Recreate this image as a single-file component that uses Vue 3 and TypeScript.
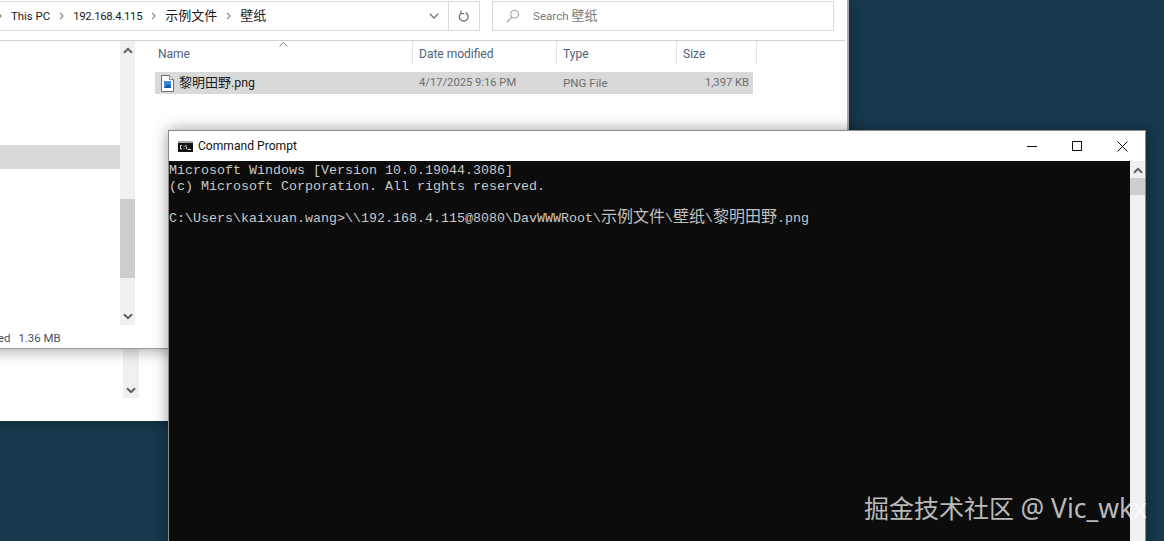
<script setup lang="ts">
interface Col { label: string; width: number }
const cols: Col[] = [
  { label: 'Name', width: 259 },
  { label: 'Date modified', width: 144 },
  { label: 'Type', width: 120 },
  { label: 'Size', width: 80 },
]
const crumbs: string[] = ['This PC', '192.168.4.115', '示例文件', '壁纸']
const isCjk = (s: string): boolean => /[\u4e00-\u9fff]/.test(s)
const isNumeric = (s: string): boolean => /^[\d.]+$/.test(s)
</script>

<template>
  <main class="desktop">
    <section class="win back">
      <div class="back-bar">
        <svg class="chev" width="10" height="7" viewBox="0 0 10 7"><path d="M1 1.200l4 4 4-4" fill="none" stroke="#606060" stroke-width="2" /></svg>
      </div>
    </section>

    <section class="win explorer">
      <header class="toolbar">
        <div class="address">
          <nav class="crumbs">
            <svg class="sep" width="5" height="8" viewBox="0 0 5 8"><path d="M1 .8l3 3.200-3 3.200" fill="none" stroke="#8a8a8a" stroke-width="1.200" /></svg>
            <template v-for="(c, i) in crumbs" :key="c">
              <span class="crumb" :class="{ wide: isCjk(c), tight: isNumeric(c) }">{{ c }}</span>
              <svg v-if="i < crumbs.length - 1" class="sep" width="5" height="8" viewBox="0 0 5 8"><path d="M1 .8l3 3.200-3 3.200" fill="none" stroke="#8a8a8a" stroke-width="1.200" /></svg>
            </template>
          </nav>
          <div class="drop">
            <svg width="10" height="6" viewBox="0 0 10 6"><path d="M.8.8L5 5 9.200.8" fill="none" stroke="#707070" stroke-width="1.300" /></svg>
          </div>
          <div class="refresh">
            <svg width="12" height="13" viewBox="0 0 12 13"><path d="M7.500 2.600A4.400 4.400 0 1 1 3 3.200" fill="none" stroke="#777" stroke-width="1.400" /><path d="M3 .4v3.200h3.200" fill="none" stroke="#777" stroke-width="1.200" /></svg>
          </div>
        </div>
        <div class="search">
          <svg width="14" height="14" viewBox="0 0 14 14"><circle cx="8.600" cy="5.200" r="4" fill="none" stroke="#9a9a9a" stroke-width="1" /><path d="M5.800 8.200L1 13" stroke="#9a9a9a" stroke-width="1.200" /></svg>
          <span>Search <span class="wide inline">壁纸</span></span>
        </div>
      </header>

      <div class="body">
        <aside class="nav">
          <div class="nav-list"><div class="nav-sel"></div></div>
          <div class="vbar">
            <svg width="10" height="7" viewBox="0 0 10 7"><path d="M1 5.800l4-4 4 4" fill="none" stroke="#606060" stroke-width="2" /></svg>
            <div class="thumb"></div>
            <svg width="10" height="7" viewBox="0 0 10 7"><path d="M1 1.200l4 4 4-4" fill="none" stroke="#606060" stroke-width="2" /></svg>
          </div>
        </aside>
        <div class="files">
          <div class="heads">
            <svg class="sort" width="9" height="5" viewBox="0 0 9 5"><path d="M.5 4.500l4-4 4 4" fill="none" stroke="#8a8a8a" /></svg>
            <div v-for="c in cols" :key="c.label" class="head" :style="{ width: c.width + 'px' }">{{ c.label }}</div>
          </div>
          <div class="row">
            <div class="cell name">
              <svg width="13" height="17" viewBox="0 0 13 17"><path d="M.5.5h8l4 4v12H.5z" fill="#fff" stroke="#6f6f6f" /><path d="M8.500.5v4h4" fill="#eee" stroke="#8a8a8a" /><rect x="3" y="6" width="7" height="7" fill="#3a8ad8" /><path d="M3 13l4-4 3 2v2z" fill="#1b5aa0" /></svg>
              <span><span class="wide inline">黎明田野</span>.png</span>
            </div>
            <div class="cell date">4/17/2025 9:16 PM</div>
            <div class="cell type">PNG File</div>
            <div class="cell size">1,397 KB</div>
          </div>
        </div>
      </div>
      <footer class="status"><span>1 item selected</span><span>1.36 MB</span></footer>
    </section>

    <section class="win cmd">
      <header class="titlebar">
        <svg class="cmd-icon" width="15" height="11" viewBox="0 0 15 11">
          <rect width="15" height="11" fill="#111" />
          <rect width="15" height="2" fill="#a9a9a9" />
          <path d="M4 4.500H2.500v3.500H4M6 5v.8M6 7.200V8M7.500 4l1.600 4.400M10 8.400h3" fill="none" stroke="#e8e8e8" />
        </svg>
        <span class="title">Command Prompt</span>
        <div class="controls">
          <svg width="10" height="10" viewBox="0 0 10 10"><path d="M0 5.500h10" stroke="#111" /></svg>
          <svg width="10" height="10" viewBox="0 0 10 10"><rect x=".5" y=".5" width="9" height="9" fill="none" stroke="#111" /></svg>
          <svg width="11" height="11" viewBox="0 0 11 11"><path d="M.5.5l10 10M10.500 .5l-10 10" stroke="#111" /></svg>
        </div>
      </header>
      <div class="console-wrap">
        <pre class="console">Microsoft Windows [Version 10.0.19044.3086]
(c) Microsoft Corporation. All rights reserved.

C:\Users\kaixuan.wang>\\192.168.4.115@8080\DavWWWRoot\<span class="cjk">示例文件</span>\<span class="cjk">壁纸</span>\<span class="cjk">黎明田野</span>.png</pre>
        <div class="cmd-bar">
          <svg class="up" width="10" height="7" viewBox="0 0 10 7"><path d="M1 5.800l4-4 4 4" fill="none" stroke="#606060" stroke-width="2" /></svg>
          <div class="cmd-thumb"></div>
        </div>
      </div>
    </section>

    <div class="mark"><span>掘金技术社区</span> <span class="mark-latin">@ Vic_wkx</span></div>
  </main>
</template>

<style>
html, body { margin: 0; background: #173a4e; }
</style>

<style scoped>
.desktop {
  position: relative;
  width: 1164px;
  height: 541px;
  overflow: hidden;
  background: #173a4e;
  font-family: Roboto, "Noto Sans CJK SC", sans-serif;
  font-size: 11.4px;
  line-height: 16px;
}
.wide { font-size: 13px; }
.tight { letter-spacing: -.3px; }
.inline { line-height: 0; }
.win { position: absolute; box-sizing: border-box; }

.back {
  left: -100px;
  top: 200px;
  width: 400px;
  height: 221px;
  background: #fff;
  box-shadow: 0 2px 12px rgba(0, 0, 0, .35);
}
.back-bar {
  position: absolute;
  left: 223px;
  bottom: 23px;
  width: 16px;
  height: 100%;
  background: #f0f0f0;
  display: flex;
  flex-direction: column;
  justify-content: flex-end;
  align-items: center;
  padding-bottom: 4px;
  box-sizing: border-box;
}

.explorer {
  left: -80px;
  top: -1px;
  width: 929px;
  height: 350px;
  background: #fff;
  border-right: 2px solid #a8acaf;
  border-bottom: 1px solid #9a9a9a;
  box-shadow: 0 2px 14px rgba(0, 0, 0, .35);
  display: flex;
  flex-direction: column;
}
.toolbar {
  height: 42px;
  flex: none;
  box-sizing: border-box;
  border-bottom: 1px solid #d0d0d0;
  display: flex;
  align-items: flex-start;
  padding-top: 2px;
  margin-right: 2px;
}
.address {
  width: 560px;
  height: 30px;
  box-sizing: border-box;
  border: 1px solid #d9d9d9;
  border-left: none;
  display: flex;
  align-items: center;
}
.crumbs {
  flex: 1;
  display: flex;
  align-items: center;
  gap: 9px;
  padding-left: 77px;
  color: #1a1a1a;
}
.crumbs .sep { flex: none; }
.crumb { white-space: nowrap; padding-bottom: 1px; }
.drop {
  width: 29px;
  height: 100%;
  display: flex;
  align-items: center;
  justify-content: center;
  border-right: 1px solid #d9d9d9;
  box-sizing: border-box;
}
.refresh {
  width: 30px;
  height: 100%;
  display: flex;
  align-items: center;
  justify-content: center;
}
.search {
  margin-left: 12px;
  width: 342px;
  height: 30px;
  box-sizing: border-box;
  border: 1px solid #d9d9d9;
  display: flex;
  align-items: center;
  gap: 13px;
  padding-left: 13px;
  color: #7a7a7a;
  font-size: 11.6px;
}
.body { flex: 1; display: flex; min-height: 0; }
.nav { width: 218px; flex: none; display: flex; }
.nav-list { width: 200px; padding-top: 104px; box-sizing: border-box; }
.nav-sel { height: 24px; background: #d9d9d9; }
.vbar {
  width: 15px;
  height: 284px;
  background: #f0f0f0;
  display: flex;
  flex-direction: column;
  align-items: center;
  padding-top: 6px;
  box-sizing: border-box;
  position: relative;
}
.vbar > svg:last-child { position: absolute; bottom: 5px; left: 3px; }
.thumb { width: 15px; height: 79px; background: #cdcdcd; margin-top: 145px; }
.files { flex: 1; padding-left: 16px; min-width: 0; }
.heads { display: flex; height: 24px; position: relative; }
.sort { position: absolute; left: 125px; top: 1px; }
.head {
  flex: none;
  box-sizing: border-box;
  padding-left: 6px;
  padding-top: 5px;
  color: #4c607a;
  border-right: 1px solid #e5e5e5;
  white-space: nowrap;
  font-size: 12px;
}
.head:first-of-type { padding-left: 4px; }
.row {
  margin-top: 7px;
  margin-left: 1px;
  width: 598px;
  height: 22px;
  background: #d9d9d9;
  display: flex;
  align-items: center;
  color: #6d6d6d;
}
.cell { flex: none; white-space: nowrap; }
.name {
  width: 264px;
  display: flex;
  align-items: center;
  gap: 5px;
  padding-left: 6px;
  box-sizing: border-box;
  color: #1a1a1a;
  font-size: 12.4px;
}
.date { width: 144px; font-size: 11.2px; }
.type { width: 110px; font-size: 11.6px; }
.size { width: 76px; text-align: right; font-size: 11.2px; }
.status {
  height: 22px;
  flex: none;
  box-sizing: border-box;
  display: flex;
  gap: 8px;
  padding: 4px 0 0 13px;
  color: #3f4f66;
}

.cmd {
  left: 168px;
  top: 130px;
  width: 978px;
  height: 420px;
  background: #fff;
  border: 1px solid #8a8a8a;
  border-bottom: none;
  box-shadow: 0 0 14px rgba(0, 0, 0, .4);
  display: flex;
  flex-direction: column;
}
.titlebar { height: 30px; flex: none; display: flex; align-items: center; color: #111; }
.cmd-icon { margin-left: 9px; margin-right: 5px; }
.title { flex: 1; font-size: 12.1px; padding-bottom: 1px; }
.controls { display: flex; align-items: center; gap: 35px; padding-right: 17px; }
.console-wrap { flex: 1; display: flex; min-height: 0; }
.console {
  flex: 1;
  margin: 0;
  padding: 2px 0 0 0;
  background: #0c0c0c;
  color: #c8c8c8;
  font-family: "Liberation Mono", "Noto Sans CJK SC", monospace;
  font-size: 13.33px;
  line-height: 16px;
  white-space: pre;
  overflow: hidden;
}
.cjk { font-family: "Noto Sans CJK SC", sans-serif; font-size: 16px; line-height: 0; font-weight: 400; color: #c0c0c0; }
.cmd-bar {
  width: 15px;
  flex: none;
  background: #f0f0f0;
  display: flex;
  flex-direction: column;
  align-items: center;
  padding-top: 6px;
  box-sizing: border-box;
}
.up { flex: none; }
.cmd-thumb { width: 15px; height: 17px; background: #cdcdcd; margin-top: 4px; }

.mark {
  position: absolute;
  left: 864px;
  top: 491px;
  font-size: 25px;
  line-height: 34px;
  color: rgba(255, 255, 255, .72);
  white-space: nowrap;
  font-family: "Noto Sans", "Noto Sans CJK SC", sans-serif;
}
.mark-latin { font-size: 26.4px; }
</style>
